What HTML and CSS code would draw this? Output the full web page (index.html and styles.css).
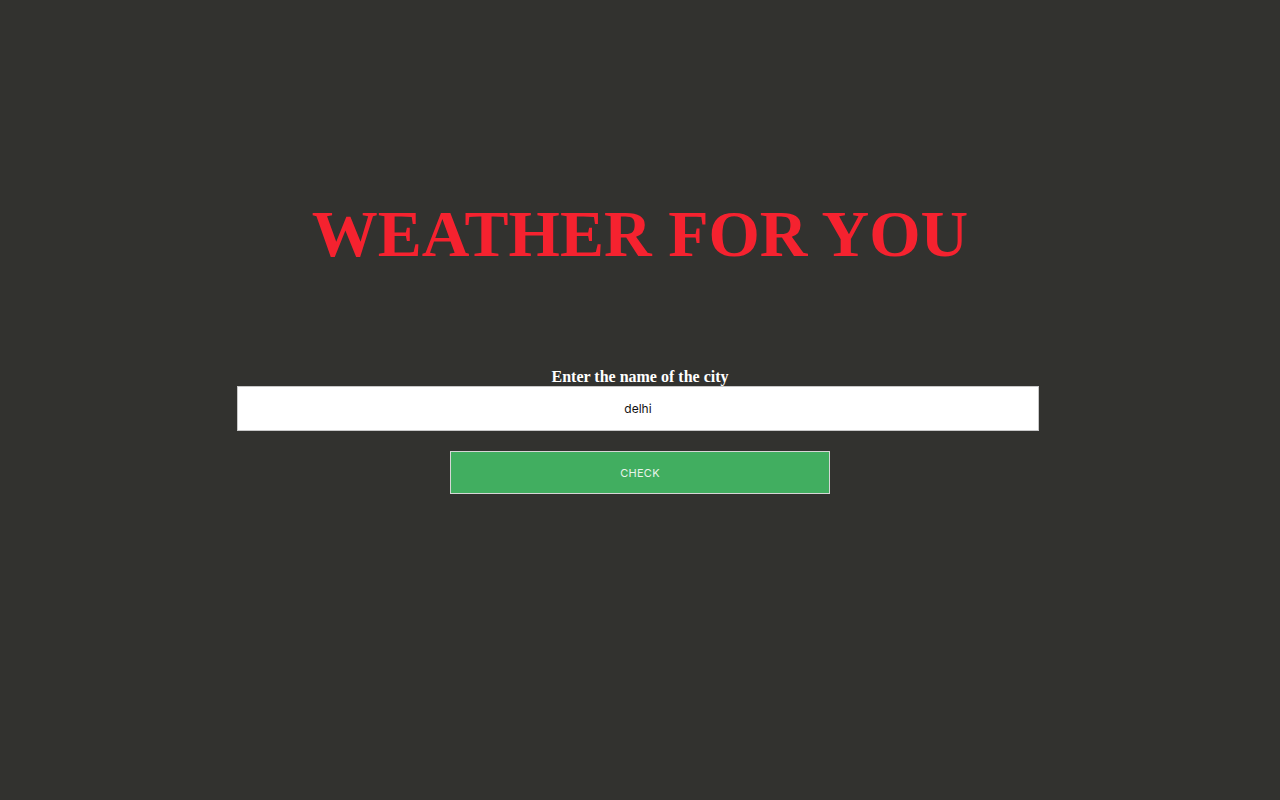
FILE: index.html
```html
<!DOCTYPE html>
<html lang="en">
<head>
<meta charset="utf-8">
<title>Weather For You</title>
<link rel="stylesheet" href="styles.css">
</head>
<body>
<main class="page">
  <h1 class="title">WEATHER FOR YOU</h1>
  <form class="form">
    <label class="label" for="city">Enter the name of the city</label>
    <input class="input" id="city" type="text" value="delhi">
    <button class="btn" type="button">CHECK</button>
  </form>
</main>
</body>
</html>
```

FILE: styles.css
```css
html, body {
  margin: 0;
  padding: 0;
  background: #32322f;
  height: 100%;
}
.page {
  display: flex;
  flex-direction: column;
  align-items: center;
  padding-top: 194px;
}
.title {
  margin: 0;
  font-family: "Liberation Serif", "Times New Roman", serif;
  font-weight: bold;
  font-size: 66px;
  line-height: 80px;
  color: #f5222f;
}
.form {
  display: flex;
  flex-direction: column;
  align-items: center;
  margin-top: 94px;
}
.label {
  font-family: "Liberation Serif", "Times New Roman", serif;
  font-weight: bold;
  font-size: 16px;
  line-height: 18px;
  color: #ffffff;
}
.input {
  box-sizing: border-box;
  width: 802px;
  height: 45px;
  margin: 0 4px 0 0;
  border: 1px solid #c8c8c8;
  background: #ffffff;
  text-align: center;
  font-family: Inter, "Liberation Sans", sans-serif;
  font-size: 12px;
  color: #111;
  outline: none;
  padding: 0;
}
.btn {
  box-sizing: border-box;
  width: 380px;
  height: 43px;
  margin-top: 20px;
  border: 1px solid #d6d6d6;
  background: #41ae60;
  color: #e8f3ea;
  font-family: Inter, "Liberation Sans", sans-serif;
  font-size: 11px;
  letter-spacing: 0.3px;
  padding: 0;
}
```
